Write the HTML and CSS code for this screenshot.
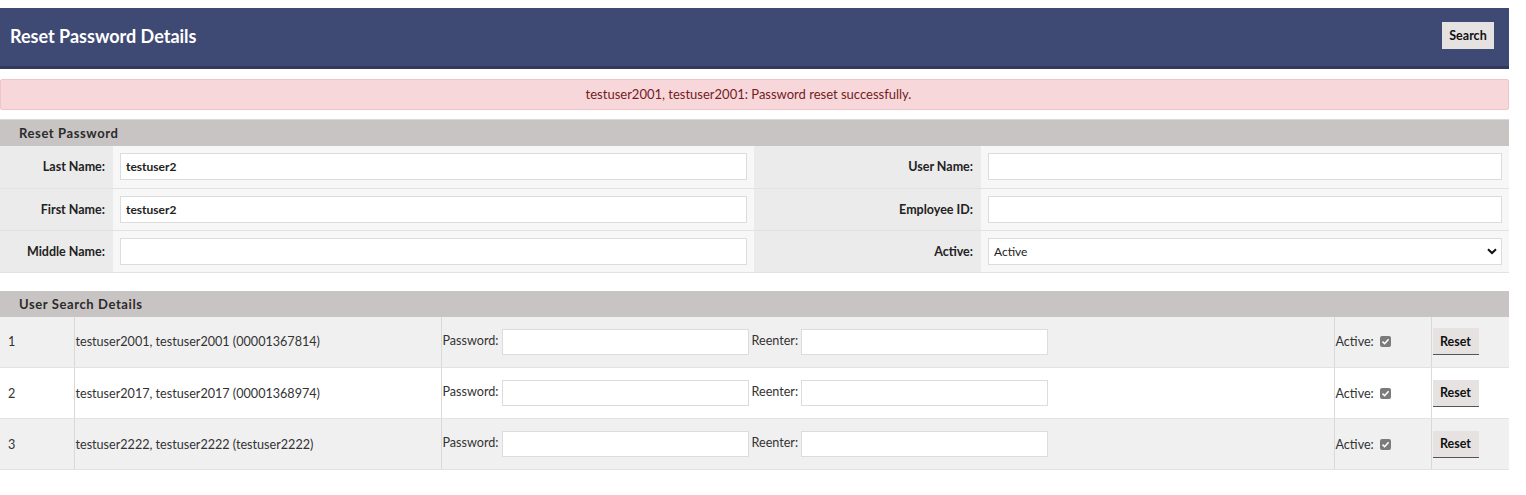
FILE: index.html
```html
<!DOCTYPE html>
<html lang="en">
<head>
  <meta charset="UTF-8">
  <title>Reset Password Details</title>
  <link rel="stylesheet" href="styles.css">
</head>
<body>
  <div class="page">
    <!-- Page header -->
    <header class="page-header">
      <h1>Reset Password Details</h1>
      <button class="btn">Search</button>
    </header>

    <div class="alert">testuser2001, testuser2001: Password reset successfully.</div>

    <!-- Search form -->
    <section class="panel">
      <h2 class="panel-title">Reset Password</h2>
      <table class="form-table">
        <colgroup>
          <col style="width:113px"><col style="width:641px"><col style="width:227px"><col>
        </colgroup>
        <tr>
          <th>Last Name:</th>
          <td><input type="text" value="testuser2"></td>
          <th>User Name:</th>
          <td><input type="text"></td>
        </tr>
        <tr>
          <th>First Name:</th>
          <td><input type="text" value="testuser2"></td>
          <th>Employee ID:</th>
          <td><input type="text"></td>
        </tr>
        <tr>
          <th>Middle Name:</th>
          <td><input type="text"></td>
          <th>Active:</th>
          <td>
            <div class="select">
              <span>Active</span>
              <svg width="10" height="7" viewBox="0 0 10 7"><path d="M1 1.2 L5 5 L9 1.2" fill="none" stroke="#111" stroke-width="2"/></svg>
            </div>
          </td>
        </tr>
      </table>
    </section>

    <!-- Results -->
    <section class="panel results">
      <h2 class="panel-title">User Search Details</h2>
      <table class="result-table">
        <colgroup>
          <col style="width:74px"><col style="width:367px"><col style="width:893px"><col style="width:97px"><col>
        </colgroup>
        <tr>
          <td>1</td>
          <td class="sep">testuser2001, testuser2001 (00001367814)</td>
          <td class="sep"><span class="pw">Password:</span><input type="password"><span class="re">Reenter:</span><input type="password"></td>
          <td class="sep">Active: <svg class="check" width="11" height="11" viewBox="0 0 11 11"><rect width="11" height="11" rx="2" fill="#7b7b7b"/><path d="M2.5 5.6 L4.6 7.7 L8.6 3.2" fill="none" stroke="#fff" stroke-width="1.6"/></svg></td>
          <td class="sep"><button class="btn btn-reset">Reset</button></td>
        </tr>
        <tr>
          <td>2</td>
          <td class="sep">testuser2017, testuser2017 (00001368974)</td>
          <td class="sep"><span class="pw">Password:</span><input type="password"><span class="re">Reenter:</span><input type="password"></td>
          <td class="sep">Active: <svg class="check" width="11" height="11" viewBox="0 0 11 11"><rect width="11" height="11" rx="2" fill="#7b7b7b"/><path d="M2.5 5.6 L4.6 7.7 L8.6 3.2" fill="none" stroke="#fff" stroke-width="1.6"/></svg></td>
          <td class="sep"><button class="btn btn-reset">Reset</button></td>
        </tr>
        <tr>
          <td>3</td>
          <td class="sep">testuser2222, testuser2222 (testuser2222)</td>
          <td class="sep"><span class="pw">Password:</span><input type="password"><span class="re">Reenter:</span><input type="password"></td>
          <td class="sep">Active: <svg class="check" width="11" height="11" viewBox="0 0 11 11"><rect width="11" height="11" rx="2" fill="#7b7b7b"/><path d="M2.5 5.6 L4.6 7.7 L8.6 3.2" fill="none" stroke="#fff" stroke-width="1.6"/></svg></td>
          <td class="sep"><button class="btn btn-reset">Reset</button></td>
        </tr>
      </table>
    </section>
  </div>
</body>
</html>
```

FILE: styles.css
```css
* {
  margin: 0;
  padding: 0;
  box-sizing: border-box;
  font-family: Lato, 'Open Sans', sans-serif;
}

body {
  margin: 8px 0 0 0;
  background: #fff;
  color: #333;
  font-size: 13px;
}

.page {
  width: 1509px;
}

/* Header */
.page-header {
  display: flex;
  align-items: center;
  justify-content: space-between;
  height: 61px;
  padding: 0 15px 3px 10px;
  background-color: #3f4a74;
  border-bottom: 3px solid #333b5c;
}

.page-header h1 {
  color: #fff;
  font-size: 18px;
  font-weight: bold;
}

.btn {
  background-color: #e6e2e2;
  border: none;
  color: #111;
  font-size: 12px;
  font-weight: bold;
  cursor: pointer;
}

.page-header .btn {
  width: 52px;
  height: 27px;
  font-size: 12.5px;
}

/* Alert */
.alert {
  margin-top: 10px;
  height: 31px;
  line-height: 29px;
  padding-right: 12px;
  text-align: center;
  font-size: 13px;
  color: #721c24;
  background-color: #f8d7da;
  border: 1px solid #f1c4c9;
  border-radius: 2px;
}

/* Panels */
.panel {
  margin-top: 9px;
  border-top: 1px solid #d9d9d9;
}

.panel.results {
  margin-top: 18px;
  border-top: none;
}

.panel-title {
  background-color: #c8c4c4;
  height: 26px;
  line-height: 26px;
  padding-left: 19px;
  font-size: 13px;
  font-weight: bold;
  letter-spacing: 0.6px;
  color: #2b2b2b;
}

table {
  width: 100%;
  border-collapse: collapse;
  table-layout: fixed;
}

input[type="text"],
input[type="password"],
.select {
  height: 27px;
  border: 1px solid #dcdcdc;
  background: #fff;
  font-size: 12px;
  font-weight: bold;
  color: #222;
  padding: 0 5px;
  outline: none;
}

/* Search form */
.form-table th,
.form-table td {
  height: 42px;
  border-bottom: 1px solid #e2e2e2;
}

.form-table th {
  background-color: #ebebeb;
  text-align: right;
  padding-right: 8px;
  font-size: 12.5px;
  font-weight: bold;
  color: #222;
}

.form-table td {
  background-color: #f7f7f7;
  padding: 0 7px;
}

.form-table input {
  width: 100%;
}

.select {
  display: flex;
  align-items: center;
  justify-content: space-between;
  padding-right: 4px;
  font-weight: normal;
}

/* Results */
.result-table td {
  height: 51px;
  padding-left: 8px;
  font-size: 12.6px;
  color: #333;
  border-bottom: 1px solid #e2e2e2;
}

.result-table tr:nth-child(odd) td {
  background-color: #f0f0f0;
}

.result-table td.sep {
  border-left: 1px solid #d9d9d9;
  padding-left: 1px;
}

.result-table input[type="password"] {
  width: 247px;
  height: 26px;
  vertical-align: middle;
  margin-left: 3px;
}

.result-table .re {
  margin-left: 3px;
}

.check {
  margin-left: 3px;
  vertical-align: -1px;
}

.btn-reset {
  width: 46px;
  height: 27px;
  vertical-align: middle;
  font-size: 12.5px;
  border-bottom: 1px solid #555;
}
```
